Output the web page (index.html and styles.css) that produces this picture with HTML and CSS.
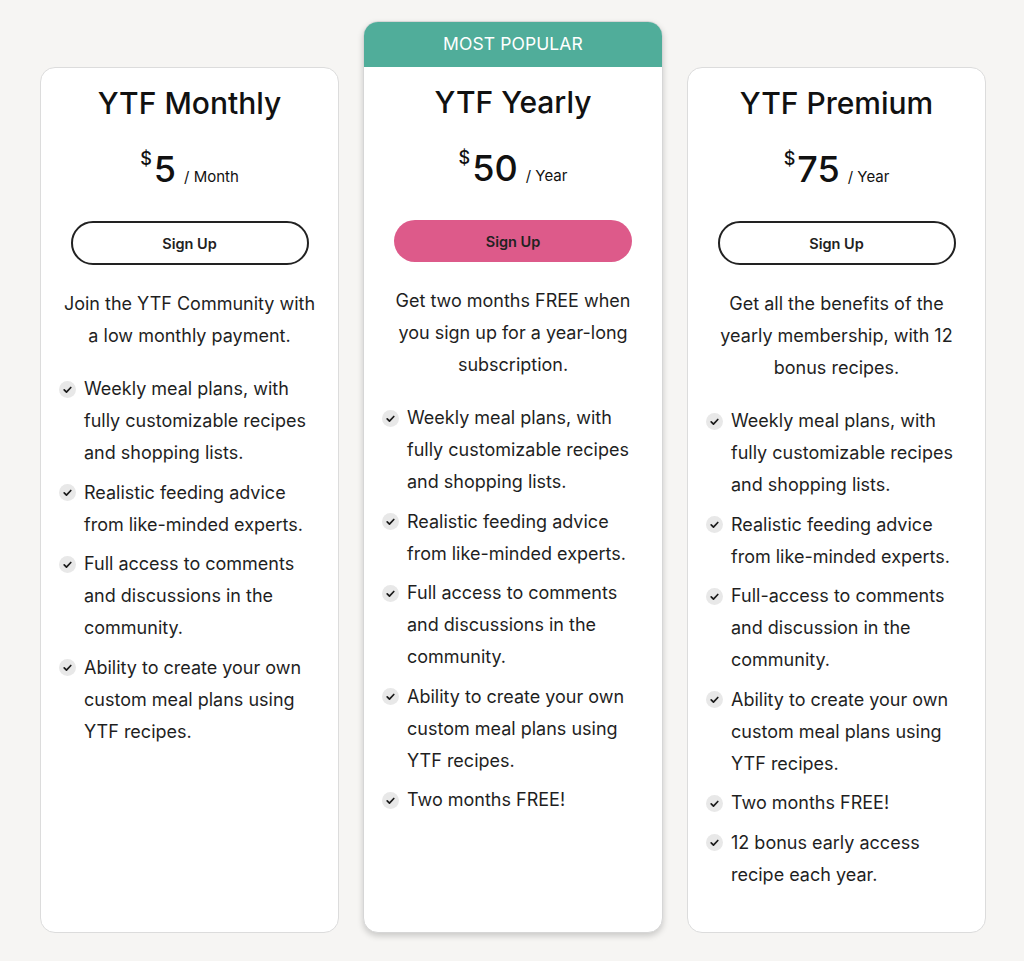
FILE: index.html
```html
<!DOCTYPE html>
<html lang="en">
<head>
<meta charset="utf-8">
<title>YTF Plans</title>
<link rel="stylesheet" href="styles.css">
</head>
<body>
<main class="plans">
  <section class="card">
    <h2 class="title">YTF Monthly</h2>
    <div class="price"><span class="cur">$</span><span class="amount">5</span><span class="per">/ Month</span></div>
    <a class="btn" href="#">Sign Up</a>
    <p class="desc">Join the YTF Community with a low monthly payment.</p>
    <ul class="features">
      <li><svg class="check" viewBox="0 0 18 18"><circle cx="9" cy="9" r="9"/><path d="M5.5 9.3l2.4 2.4 4.6-4.8"/></svg><span>Weekly meal plans, with fully customizable recipes and shopping lists.</span></li>
      <li><svg class="check" viewBox="0 0 18 18"><circle cx="9" cy="9" r="9"/><path d="M5.5 9.3l2.4 2.4 4.6-4.8"/></svg><span>Realistic feeding advice from like-minded experts.</span></li>
      <li><svg class="check" viewBox="0 0 18 18"><circle cx="9" cy="9" r="9"/><path d="M5.5 9.3l2.4 2.4 4.6-4.8"/></svg><span>Full access to comments and discussions in the community.</span></li>
      <li><svg class="check" viewBox="0 0 18 18"><circle cx="9" cy="9" r="9"/><path d="M5.5 9.3l2.4 2.4 4.6-4.8"/></svg><span>Ability to create your own custom meal plans using YTF recipes.</span></li>
    </ul>
  </section>

  <section class="card popular">
    <div class="badge">MOST POPULAR</div>
    <h2 class="title">YTF Yearly</h2>
    <div class="price"><span class="cur">$</span><span class="amount">50</span><span class="per">/ Year</span></div>
    <a class="btn btn-primary" href="#">Sign Up</a>
    <p class="desc">Get two months FREE when you sign up for a year-long subscription.</p>
    <ul class="features">
      <li><svg class="check" viewBox="0 0 18 18"><circle cx="9" cy="9" r="9"/><path d="M5.5 9.3l2.4 2.4 4.6-4.8"/></svg><span>Weekly meal plans, with fully customizable recipes and shopping lists.</span></li>
      <li><svg class="check" viewBox="0 0 18 18"><circle cx="9" cy="9" r="9"/><path d="M5.5 9.3l2.4 2.4 4.6-4.8"/></svg><span>Realistic feeding advice from like-minded experts.</span></li>
      <li><svg class="check" viewBox="0 0 18 18"><circle cx="9" cy="9" r="9"/><path d="M5.5 9.3l2.4 2.4 4.6-4.8"/></svg><span>Full access to comments and discussions in the community.</span></li>
      <li><svg class="check" viewBox="0 0 18 18"><circle cx="9" cy="9" r="9"/><path d="M5.5 9.3l2.4 2.4 4.6-4.8"/></svg><span>Ability to create your own custom meal plans using YTF recipes.</span></li>
      <li><svg class="check" viewBox="0 0 18 18"><circle cx="9" cy="9" r="9"/><path d="M5.5 9.3l2.4 2.4 4.6-4.8"/></svg><span>Two months FREE!</span></li>
    </ul>
  </section>

  <section class="card">
    <h2 class="title">YTF Premium</h2>
    <div class="price"><span class="cur">$</span><span class="amount">75</span><span class="per">/ Year</span></div>
    <a class="btn" href="#">Sign Up</a>
    <p class="desc">Get all the benefits of the yearly membership, with 12 bonus recipes.</p>
    <ul class="features">
      <li><svg class="check" viewBox="0 0 18 18"><circle cx="9" cy="9" r="9"/><path d="M5.5 9.3l2.4 2.4 4.6-4.8"/></svg><span>Weekly meal plans, with fully customizable recipes and shopping lists.</span></li>
      <li><svg class="check" viewBox="0 0 18 18"><circle cx="9" cy="9" r="9"/><path d="M5.5 9.3l2.4 2.4 4.6-4.8"/></svg><span>Realistic feeding advice from like-minded experts.</span></li>
      <li><svg class="check" viewBox="0 0 18 18"><circle cx="9" cy="9" r="9"/><path d="M5.5 9.3l2.4 2.4 4.6-4.8"/></svg><span>Full-access to comments and discussion in the community.</span></li>
      <li><svg class="check" viewBox="0 0 18 18"><circle cx="9" cy="9" r="9"/><path d="M5.5 9.3l2.4 2.4 4.6-4.8"/></svg><span>Ability to create your own custom meal plans using YTF recipes.</span></li>
      <li><svg class="check" viewBox="0 0 18 18"><circle cx="9" cy="9" r="9"/><path d="M5.5 9.3l2.4 2.4 4.6-4.8"/></svg><span>Two months FREE!</span></li>
      <li><svg class="check" viewBox="0 0 18 18"><circle cx="9" cy="9" r="9"/><path d="M5.5 9.3l2.4 2.4 4.6-4.8"/></svg><span>12 bonus early access recipe each year.</span></li>
    </ul>
  </section>
</main>
</body>
</html>
```
FILE: styles.css
```css
* { box-sizing: border-box; }
html, body { margin: 0; }
body {
  background: #f6f5f3;
  font-family: Inter, "Noto Sans", "Liberation Sans", sans-serif;
  color: #1f1f1f;
}
.plans {
  display: grid;
  grid-template-columns: 299px 300px 299px;
  column-gap: 24px;
  padding: 21px 0 29px 40px;
}
.card {
  background: #fff;
  border: 1px solid #dcdcdc;
  border-radius: 15px;
  margin-top: 46px;
  padding: 0 18px 41px;
  display: flex;
  flex-direction: column;
  align-items: center;
}
.card.popular {
  margin-top: 0;
  border-color: #d6d6d6;
  box-shadow: 0 3px 6px rgba(0,0,0,0.18);
  overflow: hidden;
}
.badge {
  align-self: stretch;
  margin: -1px -19px 0;
  height: 46px;
  background: #50ad9a;
  color: #fff;
  font-size: 17.5px;
  line-height: 46px;
  text-align: center;
  letter-spacing: 0.1px;
}
.title {
  margin: 17px 0 0;
  font-size: 30px;
  line-height: 36px;
  font-weight: 500;
  color: #111;
}
.price {
  margin-top: 28px;
  height: 40px;
  display: flex;
  align-items: baseline;
  justify-content: center;
  color: #111;
}
.cur {
  font-size: 18px;
  font-weight: 500;
  align-self: flex-start;
  line-height: 20px;
  margin-top: 0;
  margin-right: 2px;
}
.amount {
  font-size: 36px;
  line-height: 40px;
  font-weight: 500;
}
.per {
  font-size: 15px;
  margin-left: 8px;
}
.btn {
  margin-top: 32px;
  width: 238px;
  height: 44px;
  border: 2px solid #222;
  border-radius: 22px;
  display: flex;
  align-items: center;
  justify-content: center;
  font-size: 14.5px;
  font-weight: 600;
  color: #222;
  text-decoration: none;
}
.btn-primary {
  height: 42px;
  border: none;
  background: #dd5a8a;
}
.desc {
  margin: 23px 0 0;
  font-size: 18px;
  line-height: 32px;
  text-align: center;
}
.features {
  list-style: none;
  margin: 21px 0 0;
  padding: 0;
  align-self: stretch;
  display: flex;
  flex-direction: column;
  gap: 7.5px;
}
.features li {
  display: flex;
  align-items: flex-start;
  gap: 8px;
  font-size: 18px;
  line-height: 32px;
}
.check {
  flex: none;
  width: 17px;
  height: 17px;
  margin-top: 7.5px;
}
.check circle { fill: #e8e8e8; }
.check path {
  fill: none;
  stroke: #1a1a1a;
  stroke-width: 1.8;
  stroke-linecap: round;
  stroke-linejoin: round;
}
```
